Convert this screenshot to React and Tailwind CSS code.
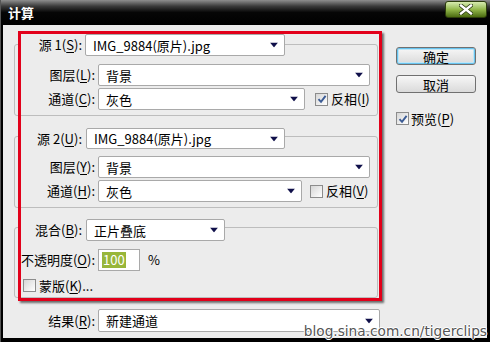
import React from "react";

const F = { fontFamily: '"Noto Sans CJK SC", "Noto Sans", sans-serif' };

function Arrow() {
  return (
    <svg width="8" height="5" viewBox="0 0 8 5" className="absolute right-[6px] top-1/2 -translate-y-1/2">
      <polygon points="0,0 8,0 4,5" fill="#10104a" />
    </svg>
  );
}

function Drop({ w, h = 22, text }) {
  return (
    <div
      className="relative flex items-center pl-[7px] bg-white border border-[#a9a9a9] rounded-[2px] text-[13px] text-black shrink-0"
      style={{ width: w, height: h }}
    >
      <span className="leading-none">{text}</span>
      <Arrow />
    </div>
  );
}

function Check({ on }) {
  return (
    <div className="w-[13px] h-[13px] border border-[#8c8c8c] bg-gradient-to-br from-[#d6d6d6] to-white flex items-center justify-center shrink-0">
      {on && (
        <svg width="10" height="10" viewBox="0 0 10 10">
          <path d="M1.5 5.2 L4 7.8 L8.6 1.8" fill="none" stroke="#3b5b94" strokeWidth="1.9" />
        </svg>
      )}
    </div>
  );
}

function L({ a, k, b = "):" }) {
  return (
    <span>
      {a}(<span className="underline underline-offset-[2px]">{k}</span>{b}
    </span>
  );
}

function Btn({ children, def }) {
  return (
    <div
      className={
        "w-[80px] h-[18px] flex items-center justify-center border border-[#707070] rounded-[3px] bg-gradient-to-b from-[#f7f7f7] to-[#dadada] text-[13px] leading-none " +
        (def ? "shadow-[inset_0_0_0_1px_#67c3ee,inset_0_0_0_2px_#bfe6f7]" : "")
      }
    >
      {children}
    </div>
  );
}

export default function App() {
  return (
    <div className="relative w-[490px] h-[342px] overflow-hidden bg-black flex flex-col border-l border-[#555]" style={F}>
      {/* title bar */}
      <div className="h-[25px] flex items-start justify-between bg-[linear-gradient(to_bottom,#8e8e8e_0%,#3a3a3a_25%,#060606_50%,#000_100%)] shrink-0">
        <div className="pl-[7px] pt-[5px] text-white font-bold text-[13px] leading-[15px]">计算</div>
        <div className="mt-[1px] mr-[3px] w-[42px] h-[17px] rounded-[3px] border border-[#2c3d0c] bg-gradient-to-b from-[#d8ecb0] via-[#93b84a] to-[#4c6c10] flex items-center justify-center">
          <svg width="14" height="11" viewBox="0 0 14 11">
            <path d="M2 1.5 L12 9.5 M12 1.5 L2 9.5" stroke="#2a3a10" strokeWidth="4" strokeLinecap="square" />
            <path d="M2 1.5 L12 9.5 M12 1.5 L2 9.5" stroke="#fff" strokeWidth="2.4" strokeLinecap="square" />
          </svg>
        </div>
      </div>

      {/* body */}
      <div className="flex-1 ml-[2px] mr-[3px] mb-[4px] bg-[#ececec] flex text-black">
        {/* left column */}
        <div className="w-[384px] pl-[11px] flex flex-col">
          {/* group 1 */}
          <div className="mt-[19px] w-[364px] h-[72px] border border-[#bdbdbd] rounded-[3px] flex flex-col">
            <div className="-mt-[11px] ml-[4px] w-fit flex items-center bg-[#ececec] text-[13px]">
              <div className="w-[63px] text-right"><L a="源 1" k="S" /></div>
              <div className="ml-[3px]"><Drop w={200} text="IMG_9884(原片).jpg" /></div>
            </div>
            <div className="mt-[8px] flex items-center text-[13px]">
              <div className="w-[80px] text-right"><L a="图层" k="L" /></div>
              <div className="ml-[3px]"><Drop w={272} text="背景" /></div>
            </div>
            <div className="mt-[2px] flex items-center text-[13px]">
              <div className="w-[80px] text-right"><L a="通道" k="C" /></div>
              <div className="ml-[3px]"><Drop w={207} text="灰色" /></div>
              <div className="ml-[10px]"><Check on /></div>
              <div className="ml-[3px]"><L a="反相" k="I" b=")" /></div>
            </div>
          </div>

          {/* group 2 */}
          <div className="mt-[20px] w-[364px] h-[72px] border border-[#bdbdbd] rounded-[3px] flex flex-col">
            <div className="-mt-[9px] ml-[4px] w-fit flex items-center bg-[#ececec] text-[13px]">
              <div className="w-[63px] text-right"><L a="源 2" k="U" /></div>
              <div className="ml-[4px]"><Drop w={199} h={21} text="IMG_9884(原片).jpg" /></div>
            </div>
            <div className="mt-[7px] flex items-center text-[13px]">
              <div className="w-[80px] text-right"><L a="图层" k="Y" /></div>
              <div className="ml-[3px]"><Drop w={272} text="背景" /></div>
            </div>
            <div className="mt-[2px] flex items-center text-[13px]">
              <div className="w-[80px] text-right"><L a="通道" k="H" /></div>
              <div className="ml-[3px]"><Drop w={204} text="灰色" /></div>
              <div className="ml-[8px]"><Check /></div>
              <div className="ml-[3px]"><L a="反相" k="V" b=")" /></div>
            </div>
          </div>

          {/* group 3 */}
          <div className="mt-[19px] w-[364px] h-[71px] border border-[#bdbdbd] rounded-[3px] flex flex-col">
            <div className="-mt-[9px] ml-[4px] w-fit flex items-center bg-[#ececec] text-[13px]">
              <div className="w-[63px] text-right"><L a="混合" k="B" /></div>
              <div className="ml-[4px]"><Drop w={139} text="正片叠底" /></div>
            </div>
            <div className="mt-[8px] flex items-center text-[13px]">
              <div className="w-[80px] text-right whitespace-nowrap"><L a="不透明度" k="O" /></div>
              <div className="ml-[3px] w-[42px] h-[22px] bg-white border border-[#a9a9a9] flex items-center pl-[3px]">
                <span className="bg-[#98b63a] text-white leading-[16px] px-[1px]">100</span>
              </div>
              <div className="ml-[8px]">%</div>
            </div>
            <div className="mt-[5px] ml-[8px] flex items-center text-[13px]">
              <Check />
              <div className="ml-[3px]"><L a="蒙版" k="K" b=")..." /></div>
            </div>
          </div>

          {/* result */}
          <div className="mt-[11px] flex items-center text-[13px]">
            <div className="w-[81px] text-right"><L a="结果" k="R" /></div>
            <div className="ml-[3px]"><Drop w={282} h={23} text="新建通道" /></div>
          </div>
        </div>

        {/* right column */}
        <div className="pl-[9px] pt-[22px] flex flex-col">
          <Btn def>确定</Btn>
          <div className="mt-[10px]"><Btn>取消</Btn></div>
          <div className="mt-[16px] flex items-center text-[13px]">
            <Check on />
            <div className="ml-[2px]"><L a="预览" k="P" b=")" /></div>
          </div>
        </div>
      </div>

      {/* red annotation box */}
      <div className="absolute left-[17px] top-[31px] w-[364px] h-[270px] border-[3px] border-[#e2001a] shadow-[2px_2px_2px_rgba(0,0,0,0.55)] pointer-events-none" />

      {/* watermark */}
      <div
        className="absolute right-[3px] bottom-[3px] text-[13.7px] leading-none text-[#555]"
        style={{
          fontFamily: '"DejaVu Sans", sans-serif',
          textShadow: "1px 0 0 #fff, -1px 0 0 #fff, 0 1px 0 #fff, 0 -1px 0 #fff",
        }}
      >
        blog.sina.com.cn/tigerclips
      </div>
    </div>
  );
}
